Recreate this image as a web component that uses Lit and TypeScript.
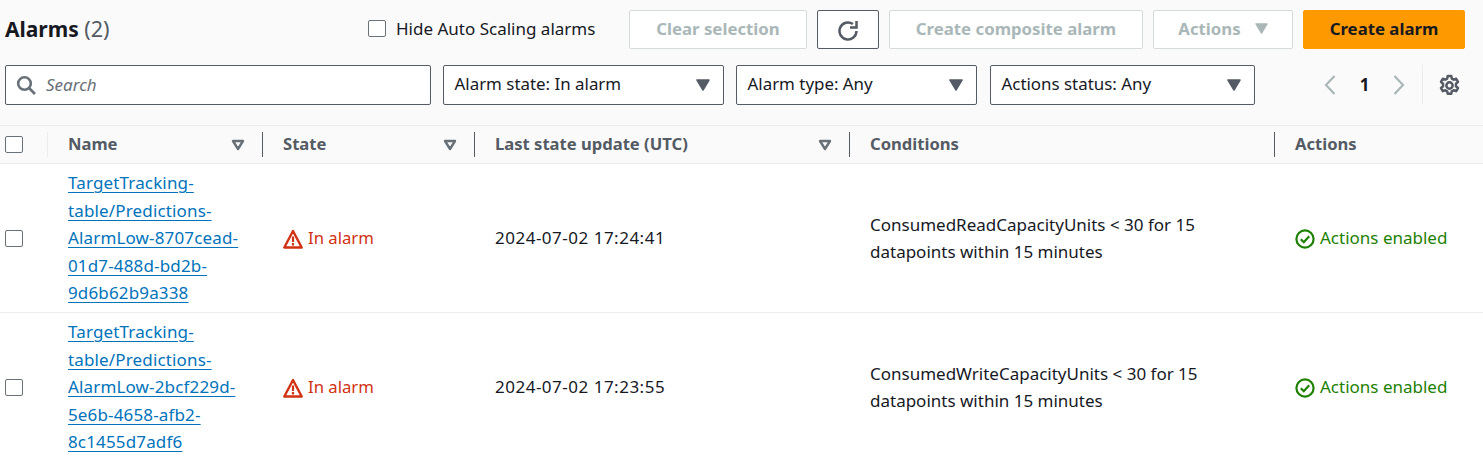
import { LitElement, html, css } from "lit";
import { customElement } from "lit/decorators.js";

const caret = html`<svg class="caret" viewBox="0 0 14 12"><path d="M1 1h12L7 11z" fill="currentColor" stroke="currentColor" stroke-width="1.5" stroke-linejoin="round"/></svg>`;
const sort = html`<svg class="sort" viewBox="0 0 14 12"><path d="M2 2h10L7 10z" fill="none" stroke="currentColor" stroke-width="2.4" stroke-linejoin="round"/></svg>`;

const rows = [
  { name: ["TargetTracking-", "table/Predictions-", "AlarmLow-8707cead-", "01d7-488d-bd2b-", "9d6b62b9a338"], time: "2024-07-02 17:24:41", cond: "ConsumedReadCapacityUnits < 30 for 15 datapoints within 15 minutes" },
  { name: ["TargetTracking-", "table/Predictions-", "AlarmLow-2bcf229d-", "5e6b-4658-afb2-", "8c1455d7adf6"], time: "2024-07-02 17:23:55", cond: "ConsumedWriteCapacityUnits < 30 for 15 datapoints within 15 minutes" },
];

@customElement("app-root")
export class AppRoot extends LitElement {
  static styles = css`
    :host { display: block; width: 1483px; height: 457px; overflow: hidden; background: #fafafa; font-family: "Noto Sans", sans-serif; font-size: 17px; color: #16191f; }
    * { box-sizing: border-box; }
    .top { display: flex; align-items: center; height: 39px; margin-top: 10px; padding-left: 5px; }
    h1 { margin: 0 0 2px; font-size: 21px; font-weight: 700; line-height: 36px; width: 363px; white-space: nowrap; }
    h1 span { font-weight: 400; color: #545b64; font-size: 21.6px; }
    .check { width: 18px; height: 17px; border: 1px solid #687078; border-radius: 2px; background: #fff; display: block; flex: none; }
    .hide { display: flex; align-items: center; gap: 10px; width: 261px; white-space: nowrap; padding-bottom: 2px; }
    .btn { height: 39px; border: 1px solid #d5dbdb; border-radius: 2px; background: #fff; color: #aab7b8; font-weight: 700; font-size: 16.8px; display: flex; align-items: center; justify-content: center; margin-right: 10px; white-space: nowrap; padding-bottom: 2px; }
    .clear { width: 178px; }
    .refresh { width: 62px; border-color: #545b64; color: #545b64; padding-bottom: 0; }
    .refresh svg { width: 22px; height: 22px; }
    .composite { width: 254px; }
    .actions { width: 140px; gap: 14px; }
    .actions .caret { width: 13px; height: 11px; }
    .create { width: 162px; background: #ff9900; border-color: #ff9900; color: #16191f; margin: 0; }
    .filters { display: flex; align-items: center; height: 40px; margin-top: 16px; padding-left: 5px; }
    .search { width: 426px; height: 40px; border: 1px solid #545b64; border-radius: 2px; background: #fff; display: flex; align-items: center; padding: 0 0 1px 10px; gap: 10px; margin-right: 12px; color: #687078; font-style: italic; }
    .search svg { width: 20px; height: 20px; }
    .sel { height: 40px; border: 1px solid #545b64; border-radius: 2px; background: #fff; display: flex; align-items: center; justify-content: space-between; padding: 0 13px 3px 10.5px; white-space: nowrap; font-size: 16.9px; }
    .sel .caret { width: 14px; height: 12px; color: #545b64; margin-top: 3px; }
    .pager { display: flex; align-items: center; height: 40px; margin-left: 68px; }
    .pager svg.chev { width: 14px; height: 22px; color: #aab7b8; }
    .num { font-weight: 700; width: 55px; text-align: center; padding-bottom: 1px; }
    .div { width: 1px; height: 40px; background: #eaeded; margin-left: 16px; margin-right: 15px; }
    .gear { width: 23px; height: 23px; color: #545b64; }
    .grid { display: grid; grid-template-columns: 48px 215px 212px 375px 425px 208px; margin-top: 20px; }
    .h { height: 39px; border-top: 1px solid #eaeded; border-bottom: 1px solid #eaeded; display: flex; align-items: center; justify-content: space-between; font-weight: 700; font-size: 16.6px; color: #545b64; padding: 0 18px 2px 20px; position: relative; white-space: nowrap; }
    .h::before { content: ""; position: absolute; left: -1px; top: 6px; height: 25px; width: 1px; background: #545b64; }
    .h.first { padding: 0 0 0 5px; }
    .h.first::before { display: none; }
    .h.n::before { background: #eaeded; left: -1px; }
    .h.n { padding-left: 20px; padding-right: 18px; }
    .sort { width: 14px; height: 12px; color: #687078; flex: none; margin-top: 2px; }
    .c { background: #fff; border-bottom: 1px solid #eaeded; display: flex; align-items: center; height: 149px; padding-left: 20px; line-height: 27.5px; }
    .c.chk { padding-left: 5px; }
    a { color: #0073bb; text-decoration: underline; text-underline-offset: 3px; display: block; white-space: nowrap; letter-spacing: 0.15px; }
    .tm { letter-spacing: 0.5px; }
    .alarm { color: #d13212; display: flex; align-items: center; gap: 5px; font-size: 16.7px; }
    .alarm svg { margin-top: 2px; }
    .alarm svg, .ok svg { width: 20px; height: 20px; flex: none; }
    .ok { color: #1d8102; display: flex; align-items: center; gap: 5px; }
    .ok svg { margin-top: 2px; }
    .cd div { width: 350px; }
  `;

  render() {
    return html`
      <div class="top">
        <h1>Alarms <span>(2)</span></h1>
        <label class="hide"><span class="check"></span>Hide Auto Scaling alarms</label>
        <div class="btn clear">Clear selection</div>
        <div class="btn refresh"><svg viewBox="0 0 22 22" fill="none" stroke="currentColor" stroke-width="2.5"><path d="M19.5 12a8.5 8.5 0 1 1-3.6-7"/><path d="M19.5 2v6.5H13" stroke-linejoin="miter"/></svg></div>
        <div class="btn composite">Create composite alarm</div>
        <div class="btn actions">Actions ${caret}</div>
        <div class="btn create">Create alarm</div>
      </div>
      <div class="filters">
        <div class="search"><svg viewBox="0 0 20 20" fill="none" stroke="#687078" stroke-width="2.6"><circle cx="8.5" cy="8.5" r="6.3"/><path d="M13 13l6 6"/></svg>Search</div>
        <div class="sel" style="width:281px;margin-right:12px">Alarm state: In alarm ${caret}</div>
        <div class="sel" style="width:241px;margin-right:13px">Alarm type: Any ${caret}</div>
        <div class="sel" style="width:265px">Actions status: Any ${caret}</div>
        <div class="pager">
          <svg class="chev" viewBox="0 0 14 22" fill="none" stroke="currentColor" stroke-width="2.2"><path d="M11.5 2L3 11l8.5 9"/></svg>
          <span class="num">1</span>
          <svg class="chev" viewBox="0 0 14 22" fill="none" stroke="currentColor" stroke-width="2.2"><path d="M2.5 2L11 11l-8.5 9"/></svg>
          <span class="div"></span>
          <svg class="gear" viewBox="0 0 22 22" fill="none" stroke="currentColor" stroke-width="2.4"><circle cx="11" cy="11" r="3"/><path d="M9.3 2h3.4l.5 2.4 1.8 1 2.4-.8 1.7 3-1.9 1.6v2.6l1.9 1.6-1.7 3-2.4-.8-1.8 1-.5 2.4H9.3l-.5-2.4-1.8-1-2.4.8-1.7-3 1.9-1.6V9.2L2.9 7.6l1.7-3 2.4.8 1.8-1z" stroke-linejoin="round"/></svg>
        </div>
      </div>
      <div class="grid">
        <div class="h first"><span class="check"></span></div>
        <div class="h n">Name ${sort}</div>
        <div class="h">State ${sort}</div>
        <div class="h">Last state update (UTC) ${sort}</div>
        <div class="h">Conditions</div>
        <div class="h">Actions</div>
        ${rows.map((r) => html`
          <div class="c chk"><span class="check"></span></div>
          <div class="c nm"><div>${r.name.map((n) => html`<a href="#">${n}</a>`)}</div></div>
          <div class="c st"><span class="alarm"><svg viewBox="0 0 20 20"><path d="M10 2L1.3 18.5h17.4z" fill="none" stroke="currentColor" stroke-width="2.4" stroke-linejoin="round"/><path d="M10 7.5v5.5M10 14v2.4" stroke="currentColor" stroke-width="2.2"/></svg>In alarm</span></div>
          <div class="c tm">${r.time}</div>
          <div class="c cd"><div>${r.cond}</div></div>
          <div class="c ac"><span class="ok"><svg viewBox="0 0 20 20" fill="none" stroke="currentColor" stroke-width="2.2"><circle cx="10" cy="10" r="8.6"/><path d="M5.8 10.2l3 3 5.4-6"/></svg>Actions enabled</span></div>
        `)}
      </div>
    `;
  }
}
